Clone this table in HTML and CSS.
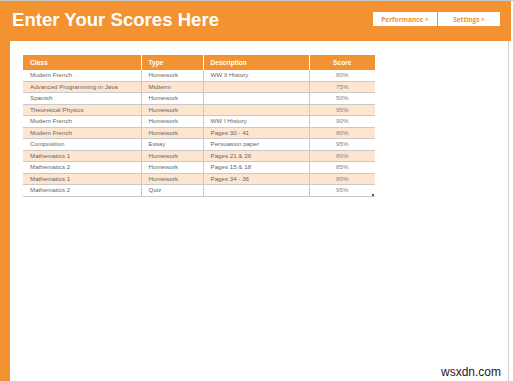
FILE: index.html
```html
<!DOCTYPE html>
<html>
<head>
<meta charset="utf-8">
<link rel="stylesheet" href="styles.css">
</head>
<body>
<div class="frame">
  <header class="top">
    <h1 class="title">Enter Your Scores Here</h1>
    <nav class="nav">
      <a class="navbtn nav-perf">Performance &gt;</a>
      <a class="navbtn nav-set">Settings &gt;</a>
    </nav>
  </header>
  <main class="content">
    <div class="tablewrap">
      <table class="scores">
        <colgroup>
          <col class="c-class"><col class="c-type"><col class="c-desc"><col class="c-score">
        </colgroup>
        <thead>
          <tr><th>Class</th><th>Type</th><th>Description</th><th class="sc">Score</th></tr>
        </thead>
        <tbody>
          <tr><td>Modern French</td><td>Homework</td><td>WW II History</td><td class="sc">80%</td></tr>
          <tr><td>Advanced Programming in Java</td><td>Midterm</td><td></td><td class="sc">75%</td></tr>
          <tr><td>Spanish</td><td>Homework</td><td></td><td class="sc">50%</td></tr>
          <tr><td>Theoretical Physics</td><td>Homework</td><td></td><td class="sc">95%</td></tr>
          <tr><td>Modern French</td><td>Homework</td><td>WW I History</td><td class="sc">90%</td></tr>
          <tr><td>Modern French</td><td>Homework</td><td>Pages 30 - 41</td><td class="sc">80%</td></tr>
          <tr><td>Composition</td><td>Essay</td><td>Persuasion paper</td><td class="sc">95%</td></tr>
          <tr><td>Mathematics 1</td><td>Homework</td><td>Pages 21 &amp; 26</td><td class="sc">80%</td></tr>
          <tr><td>Mathematics 2</td><td>Homework</td><td>Pages 15 &amp; 18</td><td class="sc">85%</td></tr>
          <tr><td>Mathematics 1</td><td>Homework</td><td>Pages 34 - 36</td><td class="sc">80%</td></tr>
          <tr><td>Mathematics 2</td><td>Quiz</td><td></td><td class="sc">95%</td></tr>
        </tbody>
      </table>
      <span class="grip"></span>
    </div>
  </main>
  <div class="watermark">wsxdn.com</div>
</div>
</body>
</html>
```
FILE: styles.css
```css
html, body {
  margin: 0;
  padding: 0;
  background: #ffffff;
}
.frame {
  position: relative;
  width: 513px;
  height: 380px;
  border-top: 1px solid #c8c8c8;
  font-family: "Liberation Sans", Arial, sans-serif;
  overflow: hidden;
}
.top {
  height: 40px;
  background: #f29231;
  display: flex;
  justify-content: space-between;
  padding: 0 11px 0 12px;
  width: 488px;
}
.title {
  margin: 0;
  padding-top: 8px;
  font-size: 18.6px;
  line-height: 22px;
  font-weight: bold;
  color: #ffffff;
}
.nav {
  display: flex;
  gap: 1px;
  padding-top: 11px;
  height: 14px;
}
.navbtn {
  display: flex;
  align-items: center;
  justify-content: center;
  height: 14px;
  background: #ffffff;
  color: #f29231;
  font-family: "Open Sans", "Liberation Sans", sans-serif;
  font-size: 6.5px;
  font-weight: bold;
}
.nav-perf { width: 64px; }
.nav-set { width: 62px; }
.content {
  height: 340px;
  border-left: 10px solid #f29231;
  border-right: 1px solid #cfcfcf;
  padding: 14px 0 0 13px;
  box-sizing: border-box;
  width: 509px;
}
.tablewrap {
  position: relative;
  width: 352px;
}
.scores {
  width: 352px;
  border-collapse: collapse;
  table-layout: fixed;
  font-size: 6.2px;
  color: #666666;
}
.c-class { width: 118px; }
.c-type { width: 62px; }
.c-desc { width: 106px; }
.c-score { width: 66px; }
.scores th {
  background: #f29231;
  color: #ffffff;
  font-weight: bold;
  font-size: 6.6px;
  text-align: left;
  height: 15px;
  padding: 0 7px;
  border-left: 1px solid #ffffff;
}
.scores th:first-child { border-left: none; }
.scores td {
  height: 10.5px;
  padding: 0 7px;
  border-bottom: 1px solid #c9c9c9;
  border-left: 1px solid #c9c9c9;
  line-height: 10px;
  white-space: nowrap;
}
.scores td:first-child { border-left: none; }
.scores tbody tr:nth-child(even) td { background: #fde5d0; }
.scores .sc { text-align: center; }
.scores td.sc { color: #858585; }
.grip {
  position: absolute;
  right: 1px;
  bottom: 1px;
  width: 2px;
  height: 2px;
  background: #555555;
}
.watermark {
  position: absolute;
  right: 12px;
  bottom: 2px;
  font-family: "Liberation Sans", Arial, sans-serif;
  font-size: 12px;
  color: #222222;
}
```
